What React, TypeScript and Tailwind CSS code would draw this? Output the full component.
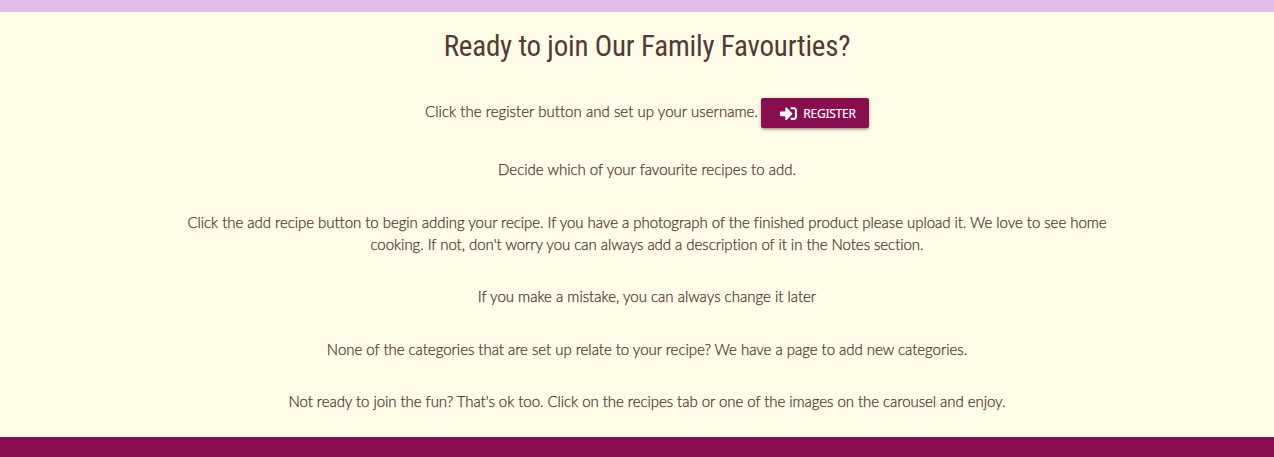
import React from "react";
import { FaSignInAlt } from "react-icons/fa";

export default function App() {
  return (
    <div className="flex h-[457px] flex-col overflow-hidden bg-[#fffde7] text-[#4e342e]">
      <div className="h-3 shrink-0 bg-[#e1bee7]" />
      <main className="flex grow flex-col items-center pl-5 text-center font-['Lato',sans-serif] text-[15px] leading-[22.5px] font-light [-webkit-text-stroke:0.25px_#4e342e]">
        <h2 className="mt-4 h-9 font-['Roboto_Condensed','Roboto',sans-serif] text-[29px] leading-[37px] font-normal tracking-[-0.2px] text-[#543a34] [font-stretch:75%] [-webkit-text-stroke:0]">
          Ready to join Our Family Favourties?
        </h2>
        <p className="mt-[34px] flex h-[30px] items-center gap-[3px]">
          <span className="-mt-1 tracking-[0.04px]">Click the register button and set up your username.</span>
          <button className="flex h-[30px] w-[108px] items-center justify-center rounded-[2px] bg-[#880e4f] pt-px pl-1.5 font-['Noto_Sans',sans-serif] text-xs font-normal tracking-[-0.25px] text-white shadow-[0_2px_2px_0_rgba(0,0,0,0.14),0_3px_1px_-2px_rgba(0,0,0,0.12),0_1px_5px_0_rgba(0,0,0,0.2)] [-webkit-text-stroke:0.15px_white]">
            <FaSignInAlt className="mr-1.5 size-[17px]" />
            REGISTER
          </button>
        </p>
        <div className="mt-[30.15px] flex w-[940px] flex-col gap-[29.9px]">
          <p>Decide which of your favourite recipes to add.</p>
          <p className="tracking-[-0.04px]">
            Click the add recipe button to begin adding your recipe. If you have a photograph of the finished product
            please upload it. We love to see home cooking. If not, don't worry you can always add a description of it
            in the Notes section.
          </p>
          <p>If you make a mistake, you can always change it later</p>
          <p className="tracking-[-0.025px]">
            None of the categories that are set up relate to your recipe? We have a page to add new categories.
          </p>
          <p className="tracking-[-0.05px]">
            Not ready to join the fun? That's ok too. Click on the recipes tab or one of the images on the carousel and
            enjoy.
          </p>
        </div>
      </main>
      <footer className="h-5 shrink-0 bg-[#880e4f]" />
    </div>
  );
}
